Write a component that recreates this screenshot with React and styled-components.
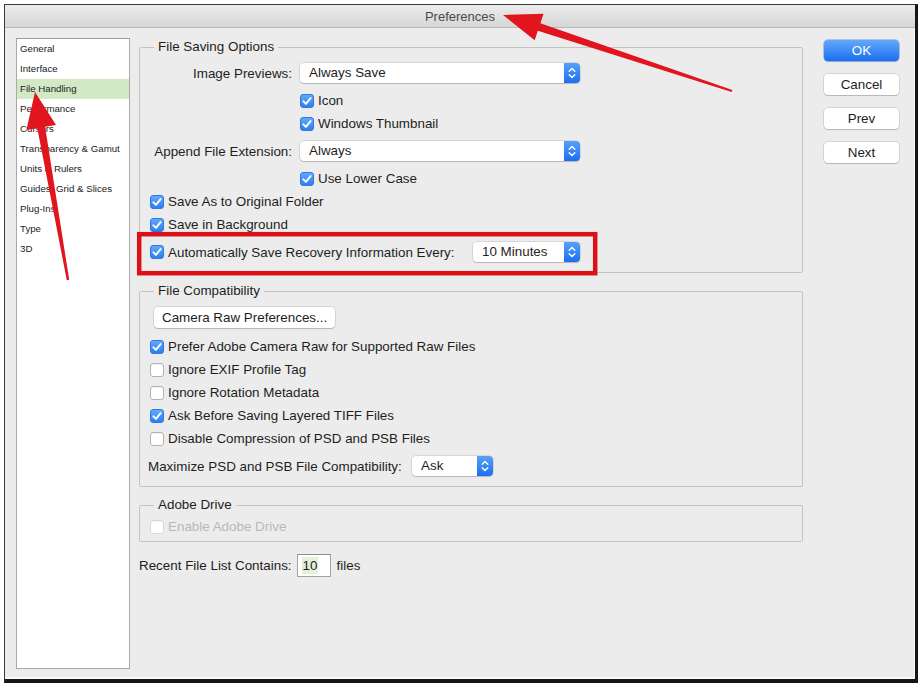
import React from 'react';
import styled, { createGlobalStyle } from 'styled-components';

const GlobalStyle = createGlobalStyle`
  html, body {
    margin: 0;
    padding: 0;
    background: #ffffff;
  }
  body {
    font-family: "Liberation Sans", Arial, sans-serif;
    color: #1e1e1e;
  }
`;

const TEXT = '13.4px';

const sidebarItems = [
  'General',
  'Interface',
  'File Handling',
  'Performance',
  'Cursors',
  'Transparency & Gamut',
  'Units & Rulers',
  'Guides, Grid & Slices',
  'Plug-Ins',
  'Type',
  '3D',
];

function CheckMark() {
  return (
    <svg width="14" height="14" viewBox="0 0 14 14">
      <path d="M3.4 7.3 L5.9 9.9 L10.6 4.1" fill="none" stroke="#fff" strokeWidth="1.9" strokeLinecap="round" strokeLinejoin="round" />
    </svg>
  );
}

function Stepper() {
  return (
    <StepperBox>
      <svg width="16" height="20" viewBox="0 0 16 20">
        <path d="M5.2 8.2 L8 5.4 L10.8 8.2" fill="none" stroke="#fff" strokeWidth="1.4" strokeLinecap="round" strokeLinejoin="round" />
        <path d="M5.2 11.8 L8 14.6 L10.8 11.8" fill="none" stroke="#fff" strokeWidth="1.4" strokeLinecap="round" strokeLinejoin="round" />
      </svg>
    </StepperBox>
  );
}

function Check({ checked, disabled, children }) {
  return (
    <CheckLabel $disabled={disabled}>
      <Box $checked={checked} $disabled={disabled}>{checked && <CheckMark />}</Box>
      {children}
    </CheckLabel>
  );
}

function Select({ width, value }) {
  return (
    <SelectBox $w={width}>
      <SelectValue>{value}</SelectValue>
      <Stepper />
    </SelectBox>
  );
}

function Annotations() {
  return (
    <Overlay width="923" height="687" viewBox="0 0 923 687">
      <g fill="#e2141d">
        <polygon points="503,15 543.5,13.7 540.4,23.2 732.3,90.05 731.7,91.95 537.8,30.8 534.7,40.3" />
        <polygon points="35,92 56,124.9 45.1,126.8 69.2,279.8 66.8,280.2 37.3,128.2 26.4,130.1" />
      </g>
      <rect x="139.2" y="234.2" width="456" height="39" fill="none" stroke="#db1019" strokeWidth="4.5" />
    </Overlay>
  );
}

export default function App() {
  return (
    <>
      <GlobalStyle />
      <Page>
        <Window>
          <TitleBar>Preferences</TitleBar>
          <Body>
            <Sidebar>
              {sidebarItems.map((item) => (
                <SideItem key={item} $active={item === 'File Handling'}>{item}</SideItem>
              ))}
            </Sidebar>

            <Main>
              <Group $pad="8px 10px 10px">
                <Legend>File Saving Options</Legend>
                <FieldRow>
                  <FieldLabel>Image Previews:</FieldLabel>
                  <Select width={280} value="Always Save" />
                </FieldRow>
                <CheckRow $indent={150}><Check checked>Icon</Check></CheckRow>
                <CheckRow $indent={150}><Check checked>Windows Thumbnail</Check></CheckRow>
                <FieldRow>
                  <FieldLabel>Append File Extension:</FieldLabel>
                  <Select width={280} value="Always" />
                </FieldRow>
                <CheckRow $indent={150}><Check checked>Use Lower Case</Check></CheckRow>
                <CheckRow><Check checked>Save As to Original Folder</Check></CheckRow>
                <CheckRow><Check checked>Save in Background</Check></CheckRow>
                <InlineRow $labelWidth={323}>
                  <Check checked>Automatically Save Recovery Information Every:</Check>
                  <Select width={107} value="10 Minutes" />
                </InlineRow>
              </Group>

              <Group $pad="8px 10px 10px">
                <Legend>File Compatibility</Legend>
                <PushButton>Camera Raw Preferences...</PushButton>
                <CheckRow $top={7}><Check checked>Prefer Adobe Camera Raw for Supported Raw Files</Check></CheckRow>
                <CheckRow><Check>Ignore EXIF Profile Tag</Check></CheckRow>
                <CheckRow><Check>Ignore Rotation Metadata</Check></CheckRow>
                <CheckRow><Check checked>Ask Before Saving Layered TIFF Files</Check></CheckRow>
                <CheckRow><Check>Disable Compression of PSD and PSB Files</Check></CheckRow>
                <InlineRow $labelWidth={262} $shift={-2}>
                  <PlainLabel>Maximize PSD and PSB File Compatibility:</PlainLabel>
                  <Select width={81} value="Ask" />
                </InlineRow>
              </Group>

              <Group $pad="2px 10px 3px">
                <Legend>Adobe Drive</Legend>
                <CheckRow><Check disabled>Enable Adobe Drive</Check></CheckRow>
              </Group>

              <RecentRow>
                Recent File List Contains:
                <NumberField><Selected>10</Selected></NumberField>
                files
              </RecentRow>
            </Main>

            <Buttons>
              <DialogButton $primary>OK</DialogButton>
              <DialogButton>Cancel</DialogButton>
              <DialogButton>Prev</DialogButton>
              <DialogButton>Next</DialogButton>
            </Buttons>
          </Body>
        </Window>
        <Annotations />
      </Page>
    </>
  );
}

const Page = styled.div`
  position: relative;
  width: 923px;
  height: 687px;
  padding: 4px 0 0 4px;
  box-sizing: border-box;
  overflow: hidden;
`;

const Window = styled.div`
  width: 914px;
  height: 679px;
  box-sizing: border-box;
  border-top: 1px solid #3a3a3a;
  border-left: 1px solid #3a3a3a;
  border-right: 3px solid #161616;
  border-bottom: 4px solid #161616;
  background: #ececec;
  box-shadow: inset 0 -2px 0 #fafafa, inset -1px 0 0 #fafafa;
  display: flex;
  flex-direction: column;
`;

const TitleBar = styled.div`
  height: 23px;
  box-sizing: border-box;
  padding-top: 2px;
  border-bottom: 1px solid #b9b9b9;
  background: linear-gradient(#ececec, #d6d6d6);
  color: #4a4a4a;
  font-size: 13px;
  line-height: 20px;
  text-align: center;
`;

const Body = styled.div`
  flex: 1;
  display: flex;
  align-items: flex-start;
  padding: 10px 16px 10px 11px;
  min-height: 0;
`;

const Sidebar = styled.div`
  width: 114px;
  height: 100%;
  box-sizing: border-box;
  background: #ffffff;
  border: 1px solid #a9a9a9;
  border-top-color: #9c9c9c;
  display: flex;
  flex-direction: column;
`;

const SideItem = styled.div`
  height: 20px;
  line-height: 20px;
  padding-left: 3px;
  font-size: 9.7px;
  color: #222;
  white-space: nowrap;
  background: ${(p) => (p.$active ? '#d3e9c6' : 'transparent')};
`;

const Main = styled.div`
  width: 664px;
  margin-left: 9px;
  margin-top: 1px;
  display: flex;
  flex-direction: column;
  gap: 10px;
`;

const Group = styled.fieldset`
  margin: 0;
  min-width: 0;
  padding: ${(p) => p.$pad};
  border: 1px solid #c4c4c4;
  border-radius: 2px;
  display: flex;
  flex-direction: column;
  align-items: flex-start;
`;

const Legend = styled.legend`
  margin-left: 4px;
  padding: 0 4px;
  font-size: ${TEXT};
  line-height: 16px;
  color: #1e1e1e;
`;

const FieldRow = styled.div`
  display: grid;
  grid-template-columns: 142px auto;
  column-gap: 8px;
  align-items: center;
  height: 20px;
  margin: 6px 0;
  &:first-of-type {
    margin-top: 0;
  }
`;

const FieldLabel = styled.span`
  text-align: right;
  font-size: ${TEXT};
  white-space: nowrap;
`;

const PlainLabel = styled.span`
  font-size: ${TEXT};
  white-space: nowrap;
`;

const CheckRow = styled.div`
  height: 23px;
  display: flex;
  align-items: center;
  margin-left: ${(p) => p.$indent || 0}px;
  margin-top: ${(p) => p.$top || 0}px;
`;

const InlineRow = styled.div`
  height: 20px;
  margin-top: 6px;
  margin-left: ${(p) => p.$shift || 0}px;
  display: grid;
  grid-template-columns: ${(p) => p.$labelWidth - (p.$shift || 0)}px auto;
  align-items: center;
`;

const CheckLabel = styled.label`
  display: flex;
  align-items: center;
  gap: 4px;
  font-size: ${TEXT};
  white-space: nowrap;
  color: ${(p) => (p.$disabled ? '#b9b9b9' : '#1e1e1e')};
`;

const Box = styled.span`
  width: 14px;
  height: 14px;
  box-sizing: border-box;
  border-radius: 3px;
  display: inline-flex;
  flex-shrink: 0;
  background: ${(p) => (p.$checked ? 'linear-gradient(#62a9fb, #2d7ff1)' : '#ffffff')};
  border: 1px solid ${(p) => (p.$checked ? '#2b78e6' : p.$disabled ? '#dadada' : '#b3b3b3')};
  box-shadow: ${(p) => (p.$checked ? 'none' : 'inset 0 1px 0 rgba(0,0,0,0.05)')};
  svg {
    margin: -1px;
  }
`;

const SelectBox = styled.div`
  width: ${(p) => p.$w}px;
  height: 20px;
  box-sizing: border-box;
  display: flex;
  align-items: stretch;
  background: #ffffff;
  border-radius: 4px;
  box-shadow: 0 0 0 0.5px rgba(0,0,0,0.18), 0 1px 1px rgba(0,0,0,0.15);
  overflow: hidden;
`;

const SelectValue = styled.span`
  flex: 1;
  padding-left: 9px;
  font-size: ${TEXT};
  line-height: 20px;
  white-space: nowrap;
  color: #1e1e1e;
`;

const StepperBox = styled.span`
  width: 16px;
  display: flex;
  align-items: center;
  justify-content: center;
  background: linear-gradient(#58a0fa, #1b6ff0);
`;

const PushButton = styled.div`
  margin-left: 4px;
  height: 21px;
  box-sizing: border-box;
  padding: 0 8px;
  display: flex;
  align-items: center;
  font-size: ${TEXT};
  background: #ffffff;
  border-radius: 4px;
  box-shadow: 0 0 0 0.5px rgba(0,0,0,0.2), 0 1px 1px rgba(0,0,0,0.15);
`;

const RecentRow = styled.div`
  margin-top: 2px;
  height: 23px;
  display: flex;
  align-items: center;
  font-size: ${TEXT};
  white-space: nowrap;
`;

const NumberField = styled.span`
  margin: 0 6px 0 5px;
  width: 34px;
  height: 23px;
  box-sizing: border-box;
  border: 1px solid #a3a3a3;
  border-top-color: #8e8e8e;
  background: #ffffff;
  display: flex;
  align-items: center;
  padding-left: 4px;
`;

const Selected = styled.span`
  background: #e2f1d8;
  padding: 1px 1px;
  line-height: 15px;
`;

const Buttons = styled.div`
  width: 75px;
  margin-left: 21px;
  margin-top: 2px;
  display: flex;
  flex-direction: column;
  gap: 13px;
`;

const DialogButton = styled.div`
  height: 21px;
  box-sizing: border-box;
  border-radius: 4px;
  display: flex;
  align-items: center;
  justify-content: center;
  font-size: ${TEXT};
  color: ${(p) => (p.$primary ? '#ffffff' : '#1e1e1e')};
  background: ${(p) => (p.$primary ? 'linear-gradient(#62a8fc, #1a6ff0)' : '#ffffff')};
  box-shadow: ${(p) => (p.$primary
    ? '0 0 0 0.5px rgba(0,60,180,0.5), 0 1px 1px rgba(0,0,0,0.15)'
    : '0 0 0 0.5px rgba(0,0,0,0.2), 0 1px 1px rgba(0,0,0,0.15)')};
`;

const Overlay = styled.svg`
  position: absolute;
  left: 0;
  top: 0;
  pointer-events: none;
`;
